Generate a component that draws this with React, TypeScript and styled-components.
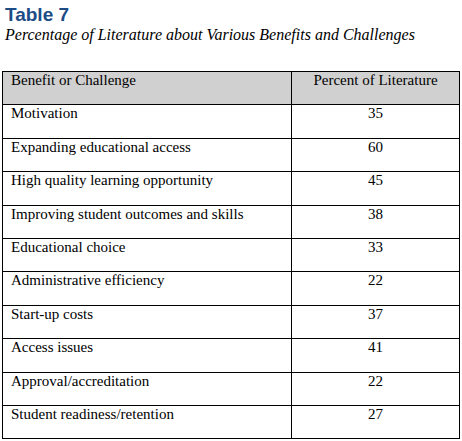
import React from "react";
import styled, { createGlobalStyle } from "styled-components";

const title_color: string = "#1c4c86";
const header_color: string = "#d0d0d0";
const line_color: string = "#000000";

const rows: [string, number][] = [
  ["Motivation", 35],
  ["Expanding educational access", 60],
  ["High quality learning opportunity", 45],
  ["Improving student outcomes and skills", 38],
  ["Educational choice", 33],
  ["Administrative efficiency", 22],
  ["Start-up costs", 37],
  ["Access issues", 41],
  ["Approval/accreditation", 22],
  ["Student readiness/retention", 27],
];

const GlobalStyle = createGlobalStyle`
  html, body {
    margin: 0;
    padding: 0;
    background: #ffffff;
  }
`;

function App() {
  return (
    <Page>
      <GlobalStyle />
      <Title>Table 7</Title>
      <Caption>Percentage of Literature about Various Benefits and Challenges</Caption>
      <DataTable>
        <colgroup>
          <Col $width={289} />
          <Col $width={168} />
        </colgroup>
        <thead>
          <tr>
            <HeadCell>Benefit or Challenge</HeadCell>
            <HeadCell $center>Percent of Literature</HeadCell>
          </tr>
        </thead>
        <tbody>
          {rows.map(([label, pct]) => (
            <tr key={label}>
              <Cell>{label}</Cell>
              <Cell $center>{pct}</Cell>
            </tr>
          ))}
        </tbody>
      </DataTable>
    </Page>
  );
}

const Page = styled.div`
  width: 462px;
  height: 441px;
  overflow: hidden;
  padding-top: 4px;
  box-sizing: border-box;
`;

const Title = styled.h1`
  margin: 0;
  padding-left: 5px;
  font-family: "Liberation Sans", Arial, sans-serif;
  font-weight: bold;
  font-size: 19px;
  line-height: 22px;
  color: ${title_color};
`;

const Caption = styled.div`
  padding-left: 5px;
  font-family: "Liberation Serif", "Times New Roman", serif;
  font-style: italic;
  font-size: 16px;
  line-height: 17px;
  color: #000;
`;

const DataTable = styled.table`
  margin: 28px 0 0 2px;
  width: 458px;
  border-collapse: collapse;
  table-layout: fixed;
  font-family: "Liberation Serif", "Times New Roman", serif;
  font-size: 15px;
  color: #000;

  tr {
    height: 33.4px;
  }
`;

const Col = styled.col<{ $width: number }>`
  width: ${(p) => p.$width}px;
`;

const HeadCell = styled.th<{ $center?: boolean }>`
  background: ${header_color};
  border: 1px solid ${line_color};
  padding: 0 8px;
  font-weight: normal;
  text-align: ${(p) => (p.$center ? "center" : "left")};
  vertical-align: top;
  line-height: 17px;
`;

const Cell = styled.td<{ $center?: boolean }>`
  border: 1px solid ${line_color};
  padding: 0 8px;
  text-align: ${(p) => (p.$center ? "center" : "left")};
  vertical-align: top;
  line-height: 17px;
`;

export default App;
